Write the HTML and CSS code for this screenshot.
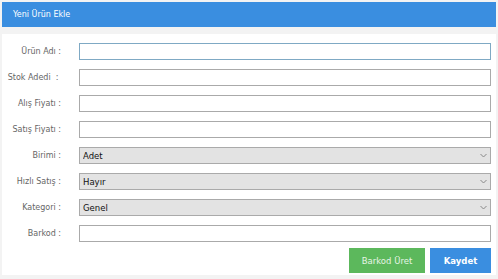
FILE: index.html
```html
<!DOCTYPE html>
<html lang="tr">
<head>
  <meta charset="UTF-8">
  <title>Yeni Ürün Ekle</title>
  <link rel="stylesheet" href="styles.css">
</head>
<body>

<div class="panel">
  <div class="panel-heading">Yeni Ürün Ekle</div>
  <div class="panel-strip"></div>
  <form class="panel-body" id="productForm">
    <div class="form-row">
      <label for="name">Ürün Adı :</label>
      <input type="text" id="name" class="focused">
    </div>
    <div class="form-row">
      <label for="stock">Stok Adedi&nbsp; :&nbsp;</label>
      <input type="text" id="stock">
    </div>
    <div class="form-row">
      <label for="buy">Alış Fiyatı :</label>
      <input type="text" id="buy">
    </div>
    <div class="form-row">
      <label for="sell">Satış Fiyatı :</label>
      <input type="text" id="sell">
    </div>
    <div class="form-row">
      <label for="unit">Birimi :</label>
      <div class="select-wrap">
        <select id="unit"><option>Adet</option></select>
        <svg class="chevron" width="7" height="5" viewBox="0 0 7 5"><path d="M0.5 1 L3.5 4 L6.5 1" fill="none" stroke="#888" stroke-width="1"/></svg>
      </div>
    </div>
    <div class="form-row">
      <label for="quick">Hızlı Satış :</label>
      <div class="select-wrap">
        <select id="quick"><option>Hayır</option></select>
        <svg class="chevron" width="7" height="5" viewBox="0 0 7 5"><path d="M0.5 1 L3.5 4 L6.5 1" fill="none" stroke="#888" stroke-width="1"/></svg>
      </div>
    </div>
    <div class="form-row">
      <label for="category">Kategori :</label>
      <div class="select-wrap">
        <select id="category"><option>Genel</option></select>
        <svg class="chevron" width="7" height="5" viewBox="0 0 7 5"><path d="M0.5 1 L3.5 4 L6.5 1" fill="none" stroke="#888" stroke-width="1"/></svg>
      </div>
    </div>
    <div class="form-row">
      <label for="barcode">Barkod :</label>
      <input type="text" id="barcode">
    </div>
    <div class="actions">
      <button type="button" class="btn btn-green">Barkod Üret</button>
      <button type="submit" class="btn btn-blue">Kaydet</button>
    </div>
  </form>
</div>

</body>
</html>
```

FILE: styles.css
```css
body {
  margin: 0;
  padding: 2px 2px 0 2px;
  background-color: #f3f3f3;
  font-family: "DejaVu Sans", Tahoma, sans-serif;
}
.panel {
  background-color: #fff;
}
.panel-heading {
  height: 25px;
  line-height: 25px;
  padding-left: 11px;
  background-color: #3a8ee0;
  color: #fff;
  font-size: 8px;
}
.panel-strip {
  height: 7px;
  background-color: #f3f3f3;
}
.panel-body {
  margin: 0;
  padding: 9px 5px 2px 0;
}
.form-row {
  display: flex;
  align-items: center;
  height: 17px;
  margin-bottom: 9px;
}
.form-row label {
  width: 59px;
  margin-right: 18px;
  text-align: right;
  font-size: 8px;
  color: #666;
  white-space: nowrap;
}
.form-row input, .form-row select {
  box-sizing: border-box;
  height: 17px;
  flex: 1;
  margin: 0;
  border: 1px solid #aaa;
  font-family: inherit;
  font-size: 8.5px;
}
.form-row input {
  background-color: #fff;
}
.form-row input.focused {
  border-color: #7fa9c4;
}
.select-wrap {
  position: relative;
  flex: 1;
  display: flex;
}
.select-wrap select {
  -webkit-appearance: none;
  appearance: none;
  background-color: #e3e3e3;
  color: #111;
  padding: 0 0 0 3px;
  border-radius: 0;
}
.chevron {
  position: absolute;
  right: 4px;
  top: 6px;
}
.actions {
  display: flex;
  justify-content: flex-end;
  gap: 5px;
  margin-top: -3px;
}
.btn {
  height: 25px;
  border: none;
  color: #fff;
  font-family: inherit;
  font-size: 8.5px;
  cursor: pointer;
}
.btn-green {
  width: 76px;
  background-color: #5cb85c;
  color: #e6f4e6;
}
.btn-blue {
  width: 61px;
  background-color: #3a8ee0;
  font-weight: bold;
}
```
